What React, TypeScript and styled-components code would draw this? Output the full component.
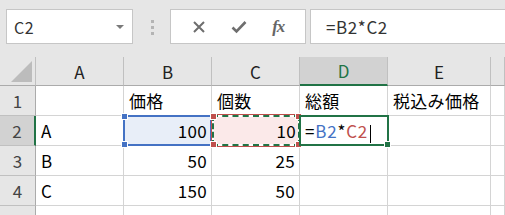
import React from "react";
import styled, { createGlobalStyle, css } from "styled-components";

const GlobalStyle = createGlobalStyle`
  body {
    margin: 0;
    background: #ffffff;
    font-family: "Noto Sans CJK JP", "Noto Sans", sans-serif;
    overflow: hidden;
  }
`;

const GREEN = "#217346";
const BLUE = "#4472c4";
const RED = "#c0504d";

const Page = styled.div`
  height: 215px;
  overflow: hidden;
`;

const Toolbar = styled.div`
  display: flex;
  align-items: flex-start;
  height: 57px;
  box-sizing: border-box;
  padding: 9px 0 0 6px;
  background: #e6e6e6;
`;

const NameBox = styled.div`
  display: flex;
  align-items: center;
  justify-content: space-between;
  width: 127px;
  height: 35px;
  box-sizing: border-box;
  padding: 0 8px 0 7px;
  background: #fff;
  border: 1px solid #c6c6c6;
  font-size: 16px;
  letter-spacing: 0.5px;
  color: #333;
`;

const DropArrow = styled.span`
  width: 0;
  height: 0;
  border-left: 4px solid transparent;
  border-right: 4px solid transparent;
  border-top: 4px solid #7a7a7a;
  margin-top: 1px;
`;

const Grip = styled.div`
  display: flex;
  flex-direction: column;
  gap: 3px;
  margin: 11px 0 0 18px;
  span {
    width: 3px;
    height: 3px;
    background: #b4b4b4;
  }
`;

const FxButtons = styled.div`
  display: flex;
  align-items: center;
  justify-content: space-around;
  width: 136px;
  height: 35px;
  box-sizing: border-box;
  margin-left: 16px;
  padding: 0 8px;
  background: #fff;
  border: 1px solid #c6c6c6;
`;

const FxLabel = styled.span`
  font-family: "Liberation Serif", serif;
  font-style: italic;
  font-weight: bold;
  font-size: 17px;
  color: #666;
  letter-spacing: -1px;
`;

const FormulaInput = styled.div`
  flex: 1;
  display: flex;
  align-items: center;
  height: 35px;
  box-sizing: border-box;
  margin-left: 4px;
  padding-left: 15px;
  background: #fff;
  border: 1px solid #c6c6c6;
  border-right: none;
  font-size: 17px;
  letter-spacing: 0.6px;
  color: #333;
`;

const Sheet = styled.div`
  display: grid;
  grid-template-columns: 36px 88px 88px 88px 88px 103px 1fr;
  grid-template-rows: 29px repeat(5, 30px);
`;

const Corner = styled.div`
  position: relative;
  background: #e6e6e6;
  border-right: 1px solid #c0c0c0;
  border-bottom: 1px solid #ababab;
  &::after {
    content: "";
    position: absolute;
    right: 3px;
    bottom: 3px;
    width: 21px;
    height: 21px;
    background: #bcbcbc;
    clip-path: polygon(100% 0, 100% 100%, 0 100%);
  }
`;

const ColHeader = styled.div<{ $active?: boolean }>`
  display: flex;
  align-items: center;
  justify-content: center;
  background: ${(p) => (p.$active ? "#d2d2d2" : "#e6e6e6")};
  border-right: 1px solid #c0c0c0;
  border-bottom: ${(p) => (p.$active ? `2px solid ${GREEN}` : "1px solid #ababab")};
  font-size: 17px;
  color: ${(p) => (p.$active ? GREEN : "#222")};
`;

const RowHeader = styled.div<{ $active?: boolean }>`
  display: flex;
  align-items: center;
  justify-content: center;
  background: ${(p) => (p.$active ? "#d2d2d2" : "#e6e6e6")};
  border-right: ${(p) => (p.$active ? `2px solid ${GREEN}` : "1px solid #ababab")};
  border-bottom: 1px solid #c0c0c0;
  font-size: 17px;
  color: #444;
`;

type Mode = "plain" | "refBlue" | "refRed" | "active";

const Cell = styled.div<{ $right?: boolean; $mode?: Mode }>`
  position: relative;
  display: flex;
  align-items: center;
  justify-content: ${(p) => (p.$right ? "flex-end" : "flex-start")};
  padding: 0 4px 0 5px;
  border-right: 1px solid #d4d4d4;
  border-bottom: 1px solid #d4d4d4;
  font-size: 17px;
  letter-spacing: 0.3px;
  color: #000;
  white-space: nowrap;
  overflow: visible;

  ${(p) =>
    p.$mode === "refBlue" &&
    css`
      border: 2px solid ${BLUE};
      margin: -1px 0 0 -1px;
      padding: 0 3px 0 4px;
      background: #e8eef8;
    `}

  ${(p) =>
    p.$mode === "refRed" &&
    css`
      z-index: 1;
      margin-top: -1px;
      border: 2px dashed ${GREEN};
      padding: 0 2px 0 4px;
      background: #fff;
      box-shadow: 0 0 0 1px ${RED}, inset 0 0 0 60px #fbe9e9;
    `}

  ${(p) =>
    p.$mode === "active" &&
    css`
      z-index: 2;
      margin: -1px -1px 0 -1px;
      border: 2px solid ${GREEN};
      padding: 0 3px 0 4px;
      letter-spacing: 0.8px;
    `}
`;

const Handle = styled.span<{ $color: string; $x: "l" | "r"; $y: "t" | "b" }>`
  position: absolute;
  z-index: 3;
  width: 5px;
  height: 5px;
  background: ${(p) => p.$color};
  border: 1px solid #fff;
  ${(p) => (p.$x === "l" ? "left: -4px;" : "right: -4px;")}
  ${(p) => (p.$y === "t" ? "top: -4px;" : "bottom: -4px;")}
`;

const RefText = styled.span<{ $color?: string }>`
  color: ${(p) => p.$color ?? "#000"};
`;

const Caret = styled.span`
  width: 1px;
  height: 18px;
  margin: 6px 0 0 2px;
  background: #000;
`;

const CrossIcon = () => (
  <svg width="14" height="14" viewBox="0 0 14 14">
    <path d="M2 2 L12 12 M12 2 L2 12" stroke="#6e6e6e" strokeWidth="2" fill="none" />
  </svg>
);

const CheckIcon = () => (
  <svg width="16" height="14" viewBox="0 0 16 14">
    <path d="M1.5 7.5 L5.5 11.5 L14.5 2" stroke="#6e6e6e" strokeWidth="2.6" fill="none" strokeLinejoin="miter" />
  </svg>
);

const columns = ["A", "B", "C", "D", "E", ""];

export default function App() {
  return (
    <Page>
      <GlobalStyle />
      <Toolbar>
        <NameBox>
          C2
          <DropArrow />
        </NameBox>
        <Grip>
          <span />
          <span />
          <span />
        </Grip>
        <FxButtons>
          <CrossIcon />
          <CheckIcon />
          <FxLabel>fx</FxLabel>
        </FxButtons>
        <FormulaInput>=B2*C2</FormulaInput>
      </Toolbar>
      <Sheet>
        <Corner />
        {columns.map((c, i) => (
          <ColHeader key={i} $active={c === "D"}>
            {c}
          </ColHeader>
        ))}

        <RowHeader>1</RowHeader>
        <Cell />
        <Cell>価格</Cell>
        <Cell>個数</Cell>
        <Cell>総額</Cell>
        <Cell>税込み価格</Cell>
        <Cell />

        <RowHeader $active>2</RowHeader>
        <Cell>A</Cell>
        <Cell $right $mode="refBlue">
          100
          <Handle $color={BLUE} $x="l" $y="t" />
          <Handle $color={BLUE} $x="l" $y="b" />
        </Cell>
        <Cell $right $mode="refRed">
          10
          <Handle $color={RED} $x="l" $y="t" />
          <Handle $color={RED} $x="l" $y="b" />
          <Handle $color={RED} $x="r" $y="t" />
          <Handle $color={RED} $x="r" $y="b" />
        </Cell>
        <Cell $mode="active">
          <RefText>=</RefText>
          <RefText $color={BLUE}>B2</RefText>
          <RefText>*</RefText>
          <RefText $color={RED}>C2</RefText>
          <Caret />
          <Handle $color={GREEN} $x="r" $y="b" />
        </Cell>
        <Cell />
        <Cell />

        <RowHeader>3</RowHeader>
        <Cell>B</Cell>
        <Cell $right>50</Cell>
        <Cell $right>25</Cell>
        <Cell />
        <Cell />
        <Cell />

        <RowHeader>4</RowHeader>
        <Cell>C</Cell>
        <Cell $right>150</Cell>
        <Cell $right>50</Cell>
        <Cell />
        <Cell />
        <Cell />

        <RowHeader />
        <Cell />
        <Cell />
        <Cell />
        <Cell />
        <Cell />
        <Cell />
      </Sheet>
    </Page>
  );
}
